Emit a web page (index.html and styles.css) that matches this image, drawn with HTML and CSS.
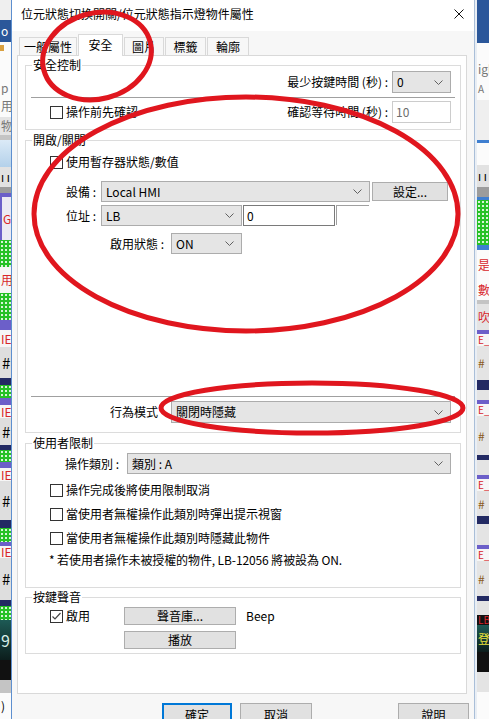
FILE: index.html
```html
<!DOCTYPE html>
<html lang="zh-Hant">
<head>
    <meta charset="UTF-8">
    <title>位元狀態切換開關/位元狀態指示燈物件屬性</title>
    <link rel="stylesheet" href="styles.css">
</head>
<body>
<div class="desk">
    <!-- background app, left edge -->
    <div class="strip strip-left">
        <div class="lt"></div>
        <div class="ab"><span class="txt w">o</span></div>
        <div class="wh"><span class="orange"></span></div>
        <div class="wh"></div>
        <div class="wh"><span class="txt g">p</span></div>
        <div class="wh"><span class="txt g">用</span></div>
        <div class="lg"><span class="txt g">物</span></div>
        <div class="gr"></div>
        <div class="sky"></div>
        <div class="tick"><span class="txt">ı ı</span></div>
        <div class="gr2"></div>
        <div class="pu"></div>
        <div class="lav"><span class="txt r">GD</span></div>
        <div class="dots"></div>
        <div class="tag"><span class="txt r">用</span></div>
        <div class="dots"></div>
        <div class="pu"></div>
        <div class="tag"><span class="txt r">IE_</span></div>
        <div class="hash"><span class="txt">#</span></div>
        <div class="navy"></div>
        <div class="dots"></div>
        <div class="pu"></div>
        <div class="tag"><span class="txt r">IE_</span></div>
        <div class="hash"><span class="txt">#</span></div>
        <div class="navy"></div>
        <div class="dots"></div>
        <div class="pu"></div>
        <div class="tag"><span class="txt r">IE_</span></div>
        <div class="hash"><span class="txt">#</span></div>
        <div class="navy"></div>
        <div class="dots"></div>
        <div class="pu"></div>
        <div class="tag"><span class="txt r">IE_</span></div>
        <div class="hash"><span class="txt">#</span></div>
        <div class="navy"></div>
        <div class="dots"></div>
        <div class="teal"><span class="txt big">9</span></div>
        <div class="black"></div>
        <div class="gr"></div>
        <div class="wh"><span class="txt">)</span></div>
    </div>

    <div class="dialog">
        <div class="titlebar">
            <span class="title">位元狀態切換開關/位元狀態指示燈物件屬性</span>
            <svg class="close" viewBox="0 0 10 10"><path d="M0.5 0.5L9.5 9.5M9.5 0.5L0.5 9.5"/></svg>
        </div>
        <div class="client">
            <div class="tabs">
                <div class="tab tab-general">一般屬性</div>
                <div class="tab tab-safety active">安全</div>
                <div class="tab tab-pic">圖片</div>
                <div class="tab tab-label">標籤</div>
                <div class="tab tab-outline">輪廓</div>
            </div>
            <div class="panel">
                <!-- 安全控制 -->
                <div class="group g-safety">
                    <span class="legend">安全控制</span>
                    <div class="row row-time">
                        <span class="lbl">最少按鍵時間 (秒) :</span>
                        <div class="select tall w-time"><span>0</span><svg class="chev" viewBox="0 0 9 5"><polyline points="0.5,0.5 4.5,4.5 8.5,0.5"/></svg></div>
                    </div>
                    <div class="sep"></div>
                    <div class="row row-confirm">
                        <label class="check"><span class="box"></span>操作前先確認</label>
                        <div class="pair">
                            <span class="lbl">確認等待時間 (秒) :</span>
                            <div class="input disabled tall w-time">10</div>
                        </div>
                    </div>
                </div>

                <!-- 開啟/關閉 -->
                <div class="group g-onoff">
                    <span class="legend">開啟/關閉</span>
                    <div class="row cb-row ind-check">
                        <label class="check"><span class="box"></span>使用暫存器狀態/數值</label>
                    </div>
                    <div class="row row-dev">
                        <span class="lbl w-short">設備 :</span>
                        <div class="select w-dev"><span>Local HMI</span><svg class="chev" viewBox="0 0 9 5"><polyline points="0.5,0.5 4.5,4.5 8.5,0.5"/></svg></div>
                        <div class="btn btn-set">設定...</div>
                    </div>
                    <div class="row row-addr">
                        <span class="lbl w-short">位址 :</span>
                        <div class="select w-lb"><span>LB</span><svg class="chev" viewBox="0 0 9 5"><polyline points="0.5,0.5 4.5,4.5 8.5,0.5"/></svg></div>
                        <div class="input w-addr">0</div>
                        <div class="ghost"></div>
                    </div>
                    <div class="row row-state">
                        <span class="lbl w-mid">啟用狀態 :</span>
                        <div class="select w-on"><span>ON</span><svg class="chev" viewBox="0 0 9 5"><polyline points="0.5,0.5 4.5,4.5 8.5,0.5"/></svg></div>
                    </div>
                    <div class="sep sep-bottom"></div>
                    <div class="row row-mode">
                        <span class="lbl w-mid">行為模式</span>
                        <div class="select tall w-mode"><span>關閉時隱藏</span><svg class="chev" viewBox="0 0 9 5"><polyline points="0.5,0.5 4.5,4.5 8.5,0.5"/></svg></div>
                    </div>
                </div>

                <!-- 使用者限制 -->
                <div class="group g-user">
                    <span class="legend">使用者限制</span>
                    <div class="row row-cat">
                        <span class="lbl w-cat">操作類別 :</span>
                        <div class="select w-class"><span>類別 : A</span><svg class="chev" viewBox="0 0 9 5"><polyline points="0.5,0.5 4.5,4.5 8.5,0.5"/></svg></div>
                    </div>
                    <div class="row cb-row ind-check first">
                        <label class="check"><span class="box"></span>操作完成後將使用限制取消</label>
                    </div>
                    <div class="row cb-row ind-check">
                        <label class="check"><span class="box"></span>當使用者無權操作此類別時彈出提示視窗</label>
                    </div>
                    <div class="row cb-row ind-check">
                        <label class="check"><span class="box"></span>當使用者無權操作此類別時隱藏此物件</label>
                    </div>
                    <p class="note">* 若使用者操作未被授權的物件, LB-12056 將被設為 ON.</p>
                </div>

                <!-- 按鍵聲音 -->
                <div class="group g-sound">
                    <span class="legend">按鍵聲音</span>
                    <div class="row row-lib">
                        <label class="check w-enable"><span class="box"><svg viewBox="0 0 11 11"><polyline points="1.5,5.5 4,8 9.5,2"/></svg></span>啟用</label>
                        <div class="btn w-snd">聲音庫...</div>
                        <span class="beep">Beep</span>
                    </div>
                    <div class="row row-play">
                        <div class="btn w-snd">播放</div>
                    </div>
                </div>
            </div>
            <div class="actions">
                <div class="btn big default">確定</div>
                <div class="btn big cancel">取消</div>
                <div class="btn big help">說明</div>
            </div>
        </div>
    </div>

    <!-- background app, right edge -->
    <div class="strip strip-right">
        <div class="ab"></div>
        <div class="wh"></div>
        <div class="wh"><span class="txt g">igh</span></div>
        <div class="wh"><span class="txt g small">A</span></div>
        <div class="lt"></div>
        <div class="bl"></div>
        <div class="wh"></div>
        <div class="tick"><span class="txt">ı ı ı</span></div>
        <div class="gr2"></div>
        <div class="bl"></div>
        <div class="dots"></div>
        <div class="bl"></div>
        <div class="wh"><span class="txt r">是</span></div>
        <div class="wh"><span class="txt r">數</span></div>
        <div class="gr"></div>
        <div class="lg"><span class="txt r">吹</span></div>
        <div class="pu"></div>
        <div class="tag"><span class="txt r small">E_2</span></div>
        <div class="lg"><span class="txt o">#</span></div>
        <div class="navy"></div>
        <div class="lg"></div>
        <div class="pu"></div>
        <div class="tag"><span class="txt r small">E_2</span></div>
        <div class="lg"><span class="txt o">#</span></div>
        <div class="navy"></div>
        <div class="lg"></div>
        <div class="pu"></div>
        <div class="tag"><span class="txt r small">E_2</span></div>
        <div class="lg"><span class="txt o">#</span></div>
        <div class="navy"></div>
        <div class="lg"></div>
        <div class="pu"></div>
        <div class="tag"><span class="txt r small">E_3</span></div>
        <div class="lg"><span class="txt o">#</span></div>
        <div class="navy"></div>
        <div class="lg"></div>
        <div class="black"><span class="txt r small">LB</span></div>
        <div class="teal"><span class="txt y">登</span></div>
        <div class="black"></div>
        <div class="lg"></div>
        <div class="wh"></div>
    </div>

    <!-- red marker circles drawn over the screenshot -->
    <svg class="marks" viewBox="0 0 489 719">
        <ellipse cx="97" cy="56" rx="55" ry="43" transform="rotate(-15 97 56)"/>
        <ellipse cx="246" cy="214" rx="212" ry="117"/>
        <ellipse cx="312" cy="408" rx="151" ry="25"/>
    </svg>
</div>
</body>
</html>
```

FILE: styles.css
```css
* {
    margin: 0;
    padding: 0;
    box-sizing: border-box;
}
body {
    width: 489px;
    height: 719px;
    overflow: hidden;
    background: #fff;
    color: #000;
    font: 12px/14px "Noto Sans CJK TC", "Noto Sans", sans-serif;
}
.desk {
    position: relative;
    display: flex;
    height: 719px;
}

/* ---------- background application strips ---------- */
.strip {
    display: grid;
    overflow: hidden;
    flex: none;
}
.strip > div {
    display: flex;
    align-items: center;
    overflow: hidden;
    white-space: nowrap;
}
.strip-left {
    width: 11px;
    grid-template-rows: 20px 22px 12px 26px 15px 22px 18px 5px 27px 20px 6px 4px 43px 27px 26px 27px 10px 17px 31px 7px 13px 7px 13px 27px 5px 12px 6px 13px 39px 8px 14px 4px 12px 42px 6px 14px 40px 20px 13px 26px;
}
.strip-right {
    width: 14px;
    border-left: 2px solid #e9eef4;
    grid-template-rows: 43px 17px 18px 22px 40px 3px 22px 22px 10px 3px 45px 5px 30px 20px 4px 26px 4px 12px 34px 10px 10px 4px 12px 39px 5px 15px 4px 12px 25px 8px 21px 4px 12px 35px 5px 14px 10px 27px 20px 20px 27px;
}
.txt {
    font-size: 12px;
    line-height: 14px;
    padding-left: 1px;
}
.txt.w { color: #fff; }
.txt.g { color: #777; }
.txt.r { color: #d8262b; }
.txt.o { color: #8a5a20; }
.txt.y { color: #e8e23a; }
.txt.small { font-size: 10px; }
.txt.big { font-size: 16px; color: #d9eee8; }
.orange {
    width: 4px;
    height: 6px;
    background: #d9a040;
}
.lt { background: #efefef; }
.wh { background: #fbfbfb; }
.lg { background: #e4e4e4; }
.ab { background: #2b579a; }
.gr { background: #c4c4c4; }
.gr2 { background: #9c9c9c; }
.bl { background: #3f7fd0; }
.sky { background: linear-gradient(#dbeaf7, #b4d1ea); }
.tick { background: #e2e2e2; }
.pu { background: #6c5fc9; }
.lav { background: #eceaf3; border-left: 2px solid #6c5fc9; }
.tag { background: #f6f6f6; }
.hash { background: #dedede; }
.hash .txt { font-size: 15px; padding-left: 2px; }
.navy { background: #232a63; }
.teal { background: linear-gradient(#1d5a55, #0c1d1c); }
.black { background: #111; }
.dots {
    background-color: #26c126;
    background-image: radial-gradient(#d8f5d8 0.8px, transparent 1px);
    background-size: 4px 4px;
}

/* ---------- dialog frame ---------- */
.dialog {
    flex: none;
    width: 464px;
    height: 719px;
    background: #f7f7f7;
    border-left: 1px solid #5d8fcf;
    border-right: 1px solid #a9bed8;
}
.titlebar {
    display: flex;
    align-items: flex-start;
    height: 31px;
    padding: 6px 0 0 9px;
    background: #fff;
}
.title {
    line-height: 16px;
}
.close {
    width: 10px;
    height: 10px;
    margin: 3px 10px 0 auto;
    fill: none;
    stroke: #111;
    stroke-width: 1;
}
.client {
    padding-top: 3px;
}

/* ---------- tabs ---------- */
.tabs {
    display: flex;
    align-items: flex-end;
    height: 21px;
    margin-left: 7px;
}
.tab {
    height: 18px;
    border: 1px solid #d9d9d9;
    border-bottom: none;
    background: #f7f7f7;
    text-align: center;
    line-height: 17px;
}
.tab + .tab { margin-left: 1px; }
.tab.active {
    position: relative;
    z-index: 1;
    height: 22px;
    margin-bottom: -1px;
    background: #fff;
    line-height: 20px;
}
.tab-general { width: 58px; }
.tab-safety { width: 45px; }
.tab-pic { width: 40px; }
.tab-label { width: 41px; }
.tab-outline { width: 42px; }

/* ---------- main panel ---------- */
.panel {
    width: 450px;
    height: 639px;
    margin-left: 5px;
    padding-top: 9px;
    background: #fff;
    border: 1px solid #d9d9d9;
}
.group {
    position: relative;
    width: 436px;
    margin-left: 7px;
    border: 1px solid #dcdcdc;
}
.group + .group { margin-top: 10px; }
.g-sound { margin-top: 9px !important; }
.legend {
    position: absolute;
    top: -8px;
    left: 6px;
    padding: 0 1px;
    background: #fff;
    line-height: 14px;
}
.row {
    display: flex;
    align-items: center;
}
.lbl {
    flex: none;
    white-space: nowrap;
}
.sep {
    height: 1px;
    margin: 0 5px;
    background: #a0a0a0;
}

/* form controls */
.select {
    flex: none;
    display: flex;
    align-items: center;
    justify-content: space-between;
    height: 21px;
    padding: 0 7px 0 4px;
    background: #e5e5e5;
    border: 1px solid #acacac;
}
.select.tall, .input.tall { height: 22px; }
.chev {
    width: 9px;
    height: 5px;
    fill: none;
    stroke: #606060;
    stroke-width: 1;
}
.input {
    flex: none;
    display: flex;
    align-items: center;
    height: 21px;
    padding-left: 3px;
    background: #fff;
    border: 1px solid #7a7a7a;
}
.input.disabled {
    border-color: #cccccc;
    color: #6d6d6d;
}
.ghost {
    flex: none;
    align-self: flex-start;
    width: 33px;
    height: 20px;
    margin-left: 1px;
    border-top: 1px solid #a0a0a0;
    border-left: 1px solid #a0a0a0;
}
.btn {
    flex: none;
    display: flex;
    align-items: center;
    justify-content: center;
    background: #e1e1e1;
    border: 1px solid #adadad;
}
.check {
    display: flex;
    align-items: center;
    gap: 3px;
    white-space: nowrap;
}
.box {
    flex: none;
    display: flex;
    align-items: center;
    justify-content: center;
    width: 13px;
    height: 13px;
    border: 1px solid #333;
    background: #fff;
}
.box svg {
    width: 11px;
    height: 11px;
    fill: none;
    stroke: #444;
    stroke-width: 1.2;
}

/* 安全控制 */
.g-safety {
    padding: 5px 0 6px;
}
.row-time {
    justify-content: flex-end;
    height: 22px;
    padding-right: 9px;
}
.row-time .lbl, .pair .lbl { margin-right: 4px; }
.w-time { width: 59px; }
.g-safety .sep { margin-top: 4px; }
.row-confirm {
    justify-content: space-between;
    height: 22px;
    margin-top: 3px;
    padding: 0 9px 0 24px;
}
.pair {
    display: flex;
    align-items: center;
}

/* 開啟/關閉 */
.g-onoff {
    display: flex;
    flex-direction: column;
    height: 293px;
    padding: 14px 0 9px;
}
.cb-row { height: 14px; }
.ind-check { padding-left: 24px; }
.row-dev {
    height: 21px;
    margin-top: 12px;
    padding-left: 40px;
}
.w-short { width: 35px; }
.w-dev { width: 269px; }
.btn-set {
    width: 76px;
    height: 19px;
    margin-left: 2px;
}
.row-addr {
    height: 21px;
    margin-top: 3px;
    padding-left: 40px;
}
.w-lb { width: 141px; }
.w-addr {
    width: 92px;
    margin-left: 1px;
}
.row-state {
    height: 21px;
    margin-top: 7px;
    padding-left: 84px;
}
.w-mid { width: 61px; }
.w-on { width: 71px; }
.sep-bottom { margin-top: auto; }
.row-mode {
    height: 22px;
    margin-top: 4px;
    padding-left: 84px;
}
.w-mode { width: 280px; }

/* 使用者限制 */
.g-user {
    height: 145px;
    padding-top: 9px;
}
.row-cat {
    height: 21px;
    padding-left: 39px;
}
.w-cat { width: 62px; }
.w-class { width: 324px; }
.g-user .cb-row { margin-top: 10px; }
.g-user .cb-row.first { margin-top: 9px; }
.note {
    margin-top: 8px;
    padding-left: 23px;
    line-height: 14px;
    letter-spacing: -0.1px;
}

/* 按鍵聲音 */
.g-sound {
    height: 57px;
    padding-top: 9px;
}
.row-lib {
    height: 18px;
    padding-left: 24px;
}
.w-enable { width: 74px; }
.w-snd {
    width: 112px;
    height: 18px;
}
.beep { margin-left: 10px; }
.row-play {
    height: 18px;
    margin-top: 6px;
    padding-left: 98px;
}

/* bottom buttons */
.actions {
    display: flex;
    margin-top: 9px;
}
.btn.big {
    height: 23px;
}
.default {
    width: 70px;
    margin-left: 150px;
    border-color: #0078d7;
    box-shadow: inset 0 0 0 1px #0078d7;
}
.cancel {
    width: 72px;
    margin-left: 8px;
}
.help {
    width: 71px;
    margin-left: 86px;
}

/* red annotation ellipses */
.marks {
    position: absolute;
    top: 0;
    left: 0;
    width: 489px;
    height: 719px;
    pointer-events: none;
    fill: none;
    stroke: #e0161e;
    stroke-width: 5;
}
```
